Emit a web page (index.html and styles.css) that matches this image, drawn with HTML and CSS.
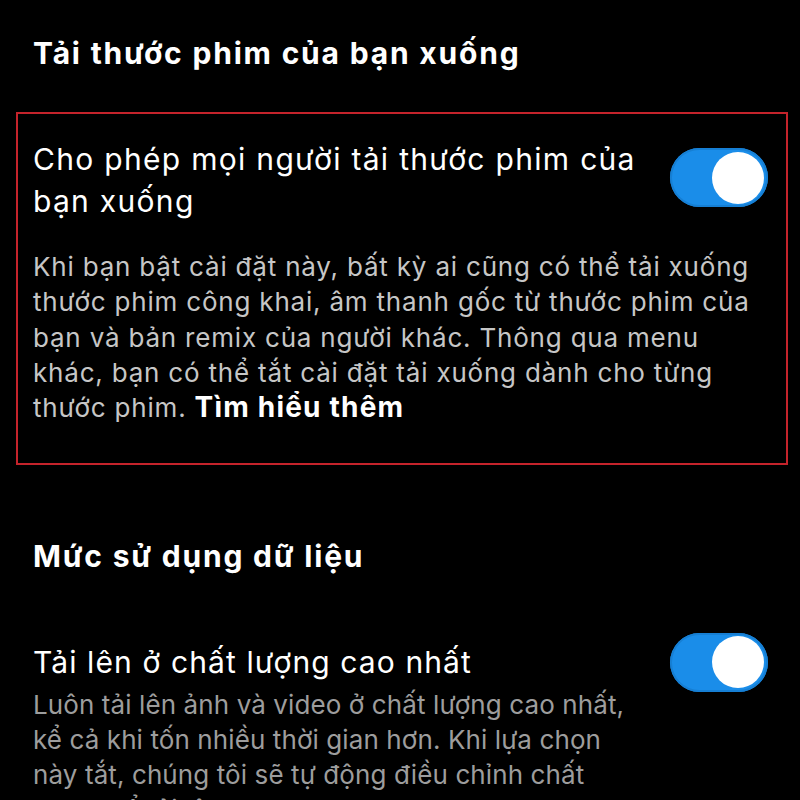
FILE: index.html
```html
<!DOCTYPE html>
<html lang="vi">
<head>
<meta charset="utf-8">
<link rel="stylesheet" href="styles.css">
</head>
<body>
  <section class="section first">
    <h2 class="heading">Tải thước phim của bạn xuống</h2>
    <div class="box">
      <div class="row">
        <div class="title t-one">Cho phép mọi người tải thước phim của bạn xuống</div>
        <div class="toggle"><span class="knob"></span></div>
      </div>
      <p class="desc light">Khi bạn bật cài đặt này, bất kỳ ai cũng có thể tải xuống thước phim công khai, âm thanh gốc từ thước phim của bạn và bản remix của người khác. Thông qua menu khác, bạn có thể tắt cài đặt tải xuống dành cho từng thước phim. <b class="link">Tìm hiểu thêm</b></p>
    </div>
  </section>
  <section class="section second">
    <h2 class="heading">Mức sử dụng dữ liệu</h2>
    <div class="row2">
      <div class="title t-two">Tải lên ở chất lượng cao nhất</div>
      <div class="toggle t2"><span class="knob"></span></div>
      <p class="desc dim">Luôn tải lên ảnh và video ở chất lượng cao nhất, kể cả khi tốn nhiều thời gian hơn. Khi lựa chọn này tắt, chúng tôi sẽ tự động điều chỉnh chất lượng để tải lên nhanh hơn.</p>
    </div>
  </section>
</body>
</html>
```
FILE: styles.css
```css
html, body {
  margin: 0;
  padding: 0;
  background: #000;
  height: 800px;
  overflow: hidden;
}
body {
  font-family: "Inter", "Noto Sans", sans-serif;
  color: #fff;
}
.heading {
  margin: 0;
  font-size: 30px;
  line-height: 36px;
  font-weight: 700;
  letter-spacing: 1.8px;
  padding-left: 33px;
}
.first {
  padding-top: 35px;
}
.first .heading {
  margin-bottom: 41px;
}
.box {
  margin: 0 12px 0 16px;
  border: 2px solid #c4232b;
  padding: 24px 18px 38px 15px;
}
.row {
  display: flex;
  align-items: flex-start;
  gap: 15px;
}
.title {
  font-size: 30px;
  line-height: 42px;
  font-weight: 400;
  flex: 1;
}
.t-one { letter-spacing: 1.3px; }
.t-two { letter-spacing: 1.1px; }
.toggle {
  flex: none;
  width: 98px;
  height: 59px;
  border-radius: 30px;
  background: #1a8de9;
  box-shadow: inset 0 0 0 2px #167fd4;
  display: flex;
  align-items: center;
  justify-content: flex-end;
  padding-right: 4px;
  box-sizing: border-box;
  margin-top: 10px;
}
.knob {
  width: 52px;
  height: 52px;
  border-radius: 50%;
  background: #fff;
}
.desc {
  margin: 27px 0 0;
  font-size: 26px;
  line-height: 35.3px;
}
.light { color: #c6c6c6; letter-spacing: 0.8px; }
.dim { color: #9d9d9d; letter-spacing: 0.1px; max-width: 608px; }
.link { color: #fff; font-weight: 700; font-size: 28px; letter-spacing: 1.2px; }
.second {
  padding-top: 73px;
}
.row2 {
  margin: 67px 32px 0 33px;
  display: grid;
  grid-template-columns: 1fr 98px;
  column-gap: 15px;
}
.row2 .title { grid-column: 1; grid-row: 1; }
.row2 .t2 {
  grid-column: 2;
  grid-row: 1;
  align-self: center;
  margin: -9px 0;
}
.row2 .desc {
  grid-column: 1;
  grid-row: 2;
  margin-top: 4px;
  line-height: 35px;
}
```
